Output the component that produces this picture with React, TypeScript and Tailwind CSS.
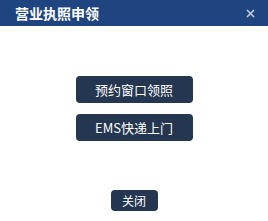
export default function App() {
  return (
    <div
      className="w-[268px] h-[221px] bg-white flex flex-col"
      style={{ fontFamily: '"Noto Sans CJK SC", "Noto Sans", sans-serif' }}
    >
      {/* header */}
      <div className="h-[26px] bg-[#1f4580] flex items-center justify-between pl-[15px] pr-[13px]">
        <span className="text-white text-[14px] font-bold leading-none">营业执照申领</span>
        <svg width="9" height="9" viewBox="0 0 9 9" className="text-[#c3cad8]">
          <path d="M1 1L8 8M8 1L1 8" stroke="currentColor" strokeWidth="1.6" />
        </svg>
      </div>

      {/* options */}
      <div className="flex flex-col items-center gap-[11px] pt-[50px]">
        <button className="w-[117px] h-[27px] rounded-[4px] bg-[#243650] text-white text-[13px] leading-none">
          预约窗口领照
        </button>
        <button className="w-[117px] h-[27px] rounded-[4px] bg-[#243650] text-white text-[13px] leading-none">
          EMS快递上门
        </button>
      </div>

      <div className="flex-1" />

      <div className="flex justify-center pb-[10px]">
        <button className="w-[47px] h-[21px] rounded-[4px] bg-[#243650] text-white text-[12px] leading-none">
          关闭
        </button>
      </div>
    </div>
  )
}
